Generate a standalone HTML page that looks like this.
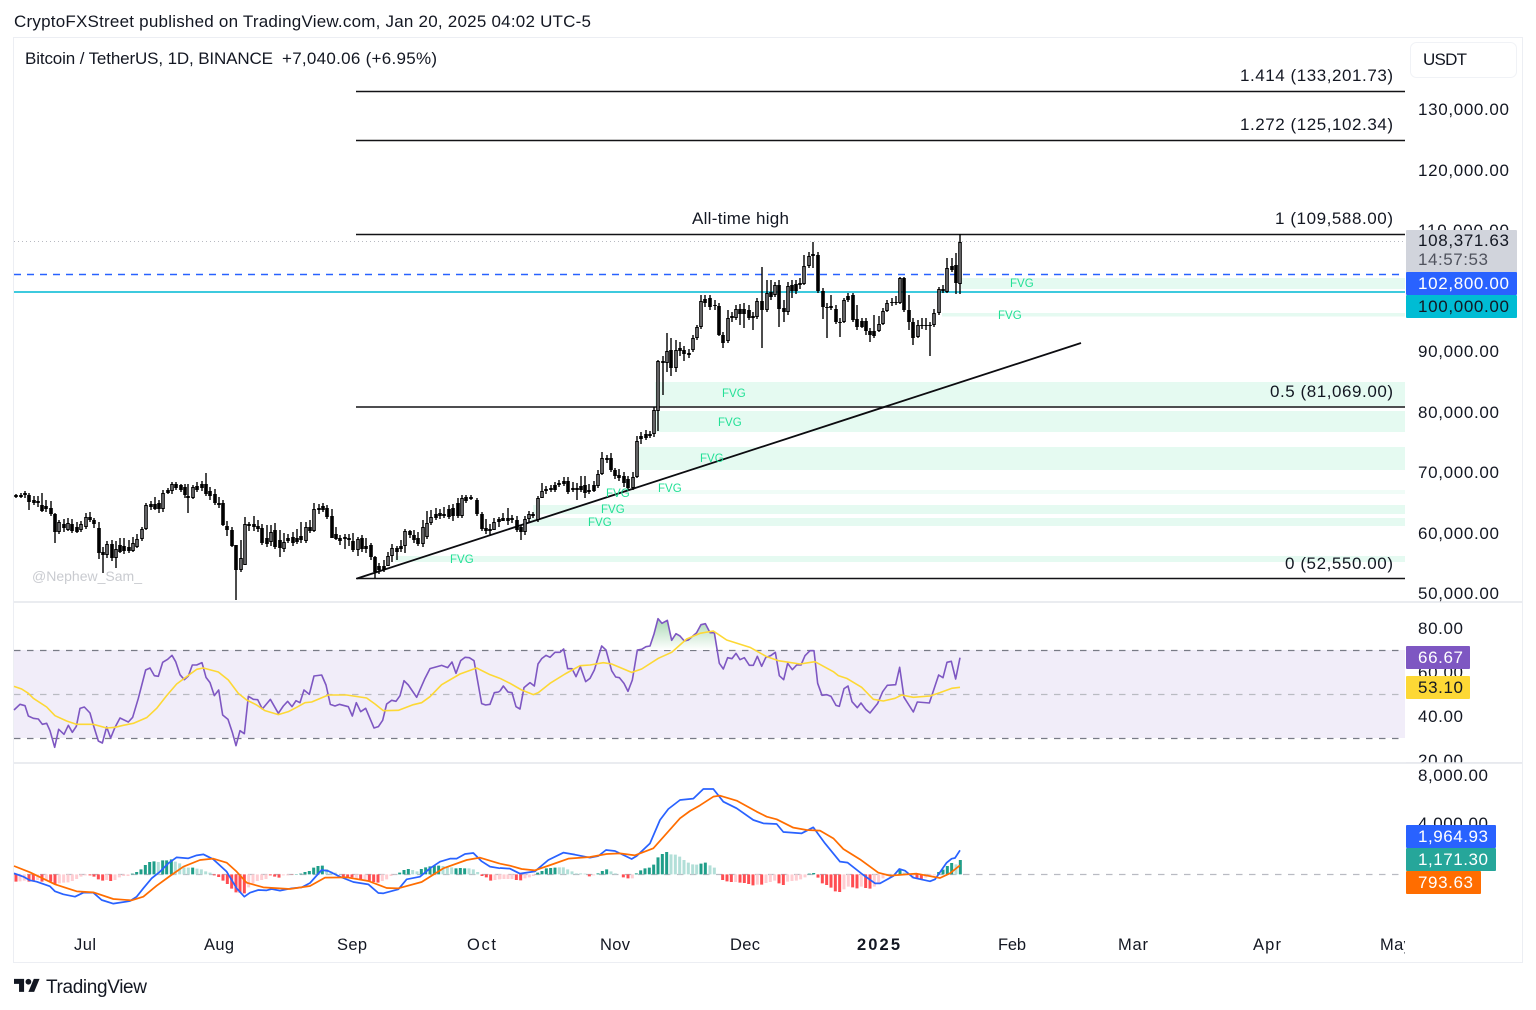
<!DOCTYPE html>
<html><head><meta charset="utf-8"><title>BTC chart</title>
<style>
html,body{margin:0;padding:0;background:#fff;width:1536px;height:1010px;overflow:hidden}
svg{display:block}
text{font-family:"Liberation Sans",sans-serif;fill:#131722;font-size:17px}
.f{font-size:11.5px;fill:#22e096}
.t{font-size:16.5px}
</style></head><body>
<svg width="1536" height="1010" viewBox="0 0 1536 1010" xmlns="http://www.w3.org/2000/svg">
<defs><linearGradient id="gr" x1="0" y1="0" x2="0" y2="1"><stop offset="0" stop-color="#a9d8b4"/><stop offset="1" stop-color="#fff"/></linearGradient></defs>
<rect width="1536" height="1010" fill="#fff"/>
<text x="14" y="27" textLength="577" lengthAdjust="spacing">CryptoFXStreet published on TradingView.com, Jan 20, 2025 04:02 UTC-5</text>
<rect x="13.5" y="37.5" width="1509" height="925" fill="#fff" stroke="#eceef3"/>
<text x="25" y="64" textLength="248" lengthAdjust="spacing">Bitcoin / TetherUS, 1D, BINANCE</text>
<text x="282" y="64" textLength="155" lengthAdjust="spacing">+7,040.06 (+6.95%)</text>

<!-- FVG -->
<g fill="#e5faf1">
<rect x="961" y="278" width="444" height="11"/>
<rect x="942" y="313" width="463" height="3.5"/>
<rect x="655" y="382" width="750" height="24"/>
<rect x="655" y="411" width="750" height="21"/>
<rect x="636" y="447" width="769" height="23"/>
<rect x="623" y="490" width="782" height="4" fill="#f0fcf7"/>
<rect x="533" y="505" width="872" height="9"/>
<rect x="530" y="518" width="875" height="8"/>
<rect x="395" y="556" width="1010" height="6"/>
</g>
<path d="M14 241.5H1405" stroke="#b8bac2" stroke-dasharray="1 3" fill="none"/>
<path d="M14 274.5H1405" stroke="#2962ff" stroke-width="1.6" stroke-dasharray="7 6" fill="none"/>
<path d="M14 292H1405" stroke="#22c3d9" stroke-width="1.7" fill="none"/>
<path d="M356 91.5H1405M356 140.5H1405M356 234.5H1405M356 407H1405M356 578.5H1405" stroke="#131316" stroke-width="1.5" fill="none"/>
<path d="M357 578.5L1081 343" stroke="#0c0c10" stroke-width="1.8" fill="none"/>

<!-- wicks -->
<path fill="none" stroke="#000" stroke-width="1.4" d="M16 494V498M21 493V498M25 491V498M29 493V510M34 496V505M38 496V507M42 493V512M46 500V512M51 501V516M55 513V543M59 520V534M64 519V532M68 518V531M72 519V533M77 522V533M81 521V532M86 513V529M90 512V522M94 518V528M99 522V559M103 547V573M107 541V558M112 540V561M116 541V568M120 538V553M124 538V554M129 540V553M133 537V552M137 534V548M142 527V541M146 503V530M151 501V510M155 497V510M159 500V513M163 490V512M168 488V494M172 482V494M176 482V490M181 484V492M185 484V498M188 484V513M193 485V499M197 482V492M202 481V491M206 473V496M210 487V500M215 489V505M219 497V508M223 500V526M227 521V536M232 527V547M236 545V600M241 540V572M245 517V565M249 522V531M254 516V531M258 520V532M262 524V545M267 525V547M271 525V546M275 523V549M280 530V557M284 533V552M288 534V543M293 532V546M297 529V544M301 522V543M306 522V543M310 520V533M314 503V532M319 504V514M323 503V512M327 505V519M332 509V538M336 527V540M340 535V545M345 534V549M349 534V546M353 533V552M358 537V556M362 535V552M366 538V553M371 543V560M375 556V578M379 563V574M384 560V572M388 552V566M392 544V562M397 546V560M401 540V552M405 529V553M410 530V538M414 530V543M418 532V546M423 520V547M427 511V539M431 510V525M436 508V520M440 509V519M444 507V518M449 505V519M453 504V521M458 498V518M462 495V518M466 495V503M471 495V500M477 498V516M482 512V531M486 519V534M490 524V535M494 518V530M499 517V527M503 513V521M508 508V525M512 515V523M517 516V532M521 525V540M525 516V535M529 511V522M533 512V518M538 496V522M542 483V498M546 486V494M551 485V492M555 482V492M559 480V487M564 477V486M568 477V494M573 482V492M577 483V500M581 476V492M585 476V498M589 484V494M594 481V492M598 470V488M602 452V475M607 455V463M611 453V472M615 468V479M619 469V481M624 472V487M628 476V490M633 472V490M637 436V478M641 432V444M646 430V440M650 431V438M654 407V437M658 360V431M663 356V395M667 333V372M671 338V376M676 340V372M680 342V356M684 346V361M689 349V358M693 335V352M697 325V340M701 295V329M705 295V307M710 295V310M715 300V310M719 303V336M723 332V348M728 310V343M732 312V322M736 305V320M740 304V325M744 303V328M749 305V320M753 312V330M757 298V319M762 267V348M767 280V312M771 280V300M775 282V297M779 280V327M784 300V322M788 282V315M792 280V298M796 280V294M800 278V289M804 255V285M809 252V268M813 242V268M818 252V293M823 288V319M827 303V338M831 295V310M836 305V324M840 318V337M844 298V323M848 293V302M853 293V322M857 305V330M862 318V328M866 318V335M870 328V342M874 315V338M879 316V332M883 308V325M887 300V312M892 298V306M896 296V305M900 277V304M904 277V312M909 295V330M913 318V345M918 320V338M922 318V329M926 318V330M930 322V356M934 309V327M939 287V315M943 285V293M947 258V293M952 258V272M956 253V294M960 234V294"/>
<!-- down bodies -->
<path fill="none" stroke="#000" stroke-width="3.6" d="M16 495V497M29 495V502M34 500V503M38 501V503M42 505V511M46 506V509M51 508V514M55 514V532M64 524V528M72 524V531M77 527V532M90 517V520M94 520V524M99 528V553M103 552V555M112 544V558M120 545V552M124 546V551M151 504V507M155 504V509M159 503V509M176 484V488M181 485V490M185 487V495M188 496V498M197 486V490M206 484V494M210 491V496M215 494V503M219 503V505M223 503V525M227 526V530M232 530V546M236 545V570M249 524V526M254 524V527M258 526V529M262 528V543M267 538V544M275 530V547M280 540V548M288 538V541M293 537V543M297 538V542M301 536V540M310 527V531M319 508V510M323 506V510M327 508V517M332 516V538M336 534V539M340 538V541M345 537V539M349 538V540M353 541V550M362 538V549M366 546V549M371 545V557M375 557V572M397 548V552M410 531V535M414 535V540M418 538V544M436 514V518M440 513V516M444 514V516M449 509V517M453 508V516M458 503V516M466 497V501M471 497V499M477 500V514M482 514V529M486 528V531M490 529V531M517 520V530M521 527V532M533 514V516M546 489V491M551 488V490M568 481V492M573 488V490M577 488V490M581 486V490M585 485V493M589 490V492M611 458V470M615 470V476M619 475V478M624 476V483M628 479V488M641 436V439M646 434V438M650 434V436M671 350V368M680 348V351M684 350V354M689 353V355M710 298V307M719 306V335M723 335V343M744 309V314M749 310V318M753 316V318M762 301V310M779 285V309M784 308V312M792 285V291M818 255V291M823 291V307M827 307V308M836 309V322M840 322V323M853 295V320M857 319V327M862 321V327M866 321V331M870 331V335M904 278V310M909 310V322M913 322V338M956 265V283"/>
<!-- up bodies -->
<path fill="none" stroke="#000" stroke-width="3.6" d="M21 495V497M25 493V495M59 522V532M68 523V530M81 524V530M86 517V527M107 544V555M116 549V558M129 547V551M133 543V551M137 539V547M142 529V539M146 505V529M163 493V509M168 490V493M172 484V491M193 487V498M202 484V488M241 558V570M245 524V565M271 532V542M284 542V549M306 527V541M314 509V531M358 539V550M379 566V570M384 566V570M388 556V566M392 548V556M401 546V549M405 531V546M423 527V544M427 523V537M431 517V523M462 498V516M494 522V530M499 519V522M503 518V521M508 518V521M512 518V520M525 519V532M529 514V519M538 498V520M542 491V498M555 485V490M559 483V485M564 481V484M594 485V491M598 474V486M602 458V474M607 458V460M633 477V488M637 441V477M654 410V434M658 361V411M663 361V363M667 351V363M676 350V368M693 338V350M697 327V338M701 301V327M705 299V303M715 305V306M728 318V341M732 316V318M736 309V318M740 309V314M757 301V317M767 293V310M771 292V297M775 285V295M788 286V312M796 284V291M800 283V285M804 266V284M809 256V266M813 254V256M831 306V308M844 300V322M848 296V300M874 331V336M879 324V331M883 311V324M887 303V311M892 302V303M896 302V303M900 278V303M918 325V337M922 325V326M926 325V326M930 325V326M934 313V325M939 289V313M943 289V291M947 268V292M952 266V270M960 242V284"/>
<path fill="none" stroke="#c4c4c8" stroke-width="1" d="M59 523V531M68 524V529M81 525V529M86 518V526M107 545V554M116 550V557M133 544V550M137 540V546M142 530V538M146 506V528M163 494V508M172 485V490M193 488V497M241 559V569M245 525V564M271 533V541M284 543V548M306 528V540M314 510V530M358 540V549M388 557V565M392 549V555M405 532V545M423 528V543M427 524V536M431 518V522M462 499V515M494 523V529M525 520V531M529 515V518M538 499V519M542 492V497M598 475V485M602 459V473M633 478V487M637 442V476M654 411V433M658 362V410M667 352V362M676 351V367M693 339V349M697 328V337M701 302V326M728 319V340M736 310V317M757 302V316M767 294V309M775 286V294M788 287V311M804 267V283M809 257V265M844 301V321M879 325V330M883 312V323M887 304V310M900 279V302M918 326V336M934 314V324M939 290V312M947 269V291M960 243V283"/>

<text x="692" y="224" textLength="97" lengthAdjust="spacing">All-time high</text>
<text x="1240" y="81" textLength="153" lengthAdjust="spacing">1.414 (133,201.73)</text>
<text x="1240" y="130" textLength="153" lengthAdjust="spacing">1.272 (125,102.34)</text>
<text x="1275" y="224" textLength="118" lengthAdjust="spacing">1 (109,588.00)</text>
<text x="1270" y="397" textLength="123" lengthAdjust="spacing">0.5 (81,069.00)</text>
<text x="1285" y="569" textLength="108" lengthAdjust="spacing">0 (52,550.00)</text>
<g>
<text class="f" x="1010" y="287">FVG</text>
<text class="f" x="998" y="319">FVG</text>
<text class="f" x="722" y="397">FVG</text>
<text class="f" x="718" y="426">FVG</text>
<text class="f" x="700" y="462">FVG</text>
<text class="f" x="658" y="492">FVG</text>
<text class="f" x="606" y="497">FVG</text>
<text class="f" x="601" y="513">FVG</text>
<text class="f" x="588" y="526">FVG</text>
<text class="f" x="450" y="563">FVG</text>
</g>
<text x="32" y="581" style="font-size:14px;fill:#c9cbd0" textLength="110" lengthAdjust="spacing">@Nephew_Sam_</text>

<!-- separators -->
<path d="M14 602H1522M14 763H1522" stroke="#e4e6ec" stroke-width="1.5" fill="none"/>

<!-- RSI -->
<rect x="14" y="650" width="1391" height="88" fill="#f1edf9"/>
<path d="M14 650.5H1405M14 738.5H1405" stroke="#787b86" stroke-width="1.2" stroke-dasharray="6.5 6.5" fill="none"/>
<path d="M14 694.5H1405" stroke="#b9bbc2" stroke-width="1.2" stroke-dasharray="6.5 6.5" fill="none"/>
<g transform="translate(500,610) scale(.33333)">
<path fill="url(#gr)" d="M412 120L450 108L462 72L474 26L486 40L502 31L515 91L528 71L540 78L553 93L565 90L590 68L603 44L616 41L630 68L643 68L649 120Z"/>
</g>
<g fill="none" stroke-linejoin="round" stroke-width="4.8">
<g transform="translate(0,610) scale(.33333)">
<path stroke="#7e57c2" d="M42 300L60 283L75 287L85 318L100 325L115 327L127 343L140 340L150 362L164 412L176 358L192 373L205 346L217 367L229 349L240 295L253 291L270 309L280 345L295 393L307 399L320 351L332 384L345 352L360 324L385 336L398 322L415 265L437 180L450 174L463 197L475 199L488 157L503 148L516 136L527 155L540 194L553 209L565 198L577 165L590 165L606 158L618 202L630 218L643 257L656 240L668 315L684 328L697 367L708 407L720 362L733 371L745 259L760 268L773 269L787 297L811 268L835 310L850 288L863 274L876 290L888 272L900 278L912 240L928 253L942 198L965 195L978 225L991 283L1005 288L1018 283L1045 290L1057 318L1069 278L1082 305L1097 295L1122 354L1135 350L1148 331L1160 282L1175 271L1188 274L1200 257L1212 212L1225 225L1250 262L1275 205L1290 176L1325 166L1343 173L1356 156L1368 190L1382 152L1395 142L1408 143L1422 152L1445 281L1457 285L1470 283L1483 248L1495 246L1500 243"/>
<path stroke="#fdd835" d="M42 229L65 237L85 250L100 265L140 291L165 317L200 333L230 343L280 343L320 354L345 352L370 346L400 340L440 323L470 295L500 257L530 222L560 200L590 178L610 174L655 186L685 210L715 250L740 270L770 285L795 302L835 314L865 305L890 292L915 278L935 276L985 255L1040 255L1100 264L1125 282L1150 302L1195 301L1240 284L1265 278L1290 260L1325 224L1380 192L1430 174L1470 194L1500 205"/>
</g>
<g transform="translate(500,610) scale(.33333)">
<path stroke="#7e57c2" d="M0 243L10 228L24 246L36 248L48 290L60 297L72 233L90 218L103 228L114 162L125 146L138 136L150 142L165 127L180 127L191 117L203 176L216 176L228 200L241 170L257 215L270 205L283 180L305 108L318 120L335 182L347 201L358 203L372 220L384 244L397 210L412 120L425 118L438 110L450 108L462 72L474 26L486 40L502 31L515 91L528 71L540 78L553 93L565 90L590 68L603 44L616 41L630 68L643 68L658 160L670 177L683 143L696 146L708 130L720 149L733 143L748 166L760 166L772 139L785 169L797 143L812 137L826 127L838 197L851 209L863 160L877 179L890 165L903 165L915 137L930 122L942 122L953 220L966 256L980 254L993 259L1008 286L1018 289L1032 236L1044 228L1056 275L1072 293L1083 279L1097 298L1110 309L1133 280L1148 245L1162 226L1187 224L1199 172L1212 262L1240 306L1252 276L1288 279L1316 195L1329 203L1341 157L1354 154L1367 207L1380 143"/>
<path stroke="#fdd835" d="M0 205L30 220L65 240L100 254L115 248L150 220L195 192L240 167L270 165L310 158L335 162L395 187L425 177L475 145L515 127L560 87L600 70L640 63L680 90L750 112L800 140L835 152L900 162L945 155L1000 185L1015 197L1040 205L1085 232L1120 268L1150 273L1185 265L1205 255L1240 262L1290 258L1320 248L1355 235L1380 232"/>
</g>
</g>

<!-- MACD -->
<path d="M14 874.5H1405" stroke="#b9bbc2" stroke-width="1.2" stroke-dasharray="6.5 6.5" fill="none"/>
<g fill="none" stroke-width="9">
<g transform="translate(0,770) scale(.33333)">
<path stroke="#ffcdd2" d="M60 313V334M73 313V332M113 313V330M139 313V330M178 313V340M191 313V338M204 313V337M217 313V333M230 313V327M243 313V320M256 313V316M320 313V330M345 313V330M358 313V322M371 313V318M384 313V318M746 313V352M759 313V340M772 313V333M785 313V330M798 313V327M850 313V316M863 313V316M1069 313V326M1095 313V330M1147 313V333M1160 313V328M1173 313V318M1186 313V314M1485 313V330M1498 313V328"/>
<path stroke="#ff4d52" d="M48 313V335M87 313V335M100 313V333M126 313V335M152 313V335M165 313V342M270 313V316M282 313V320M295 313V328M308 313V332M332 313V333M643 313V316M656 313V321M669 313V332M682 313V342M695 313V356M708 313V367M720 313V368M733 313V370M811 313V316M824 313V320M837 313V323M876 313V314M1030 313V323M1043 313V323M1056 313V322M1082 313V330M1108 313V333M1121 313V336M1134 313V338M1446 313V318M1459 313V322M1472 313V332"/>
<path stroke="#b2dfd8" d="M475 313V276M526 313V275M539 313V280M552 313V292M565 313V293M591 313V296M604 313V298M617 313V304M630 313V308M980 313V297M993 313V304M1006 313V308M1238 313V300M1251 313V304M1329 313V288M1342 313V290M1355 313V292M1407 313V295M1420 313V298M1433 313V306"/>
<path stroke="#1f9e89" d="M397 313V311M410 313V306M423 313V298M436 313V285M449 313V276M462 313V274M488 313V271M500 313V271M514 313V268M578 313V293M889 313V312M902 313V311M915 313V306M928 313V303M941 313V293M954 313V288M967 313V287M1199 313V308M1212 313V300M1225 313V297M1264 313V297M1277 313V292M1290 313V289M1303 313V287M1316 313V287M1368 313V295M1381 313V294M1394 313V295"/>
</g>
<g transform="translate(500,770) scale(.33333)">
<path stroke="#ffcdd2" d="M0 313V327M12 313V327M24 313V327M36 313V327M75 313V325M88 313V322M100 313V318M281 313V316M397 313V325M707 313V336M772 313V344M798 313V339M811 313V336M824 313V332M863 313V335M876 313V333M889 313V332M902 313V328M915 313V322M1032 313V358M1045 313V350M1084 313V350M1123 313V350M1136 313V340M1149 313V325M1162 313V318M1238 313V325M1277 313V323M1290 313V318M1303 313V316"/>
<path stroke="#ff4d52" d="M49 313V330M62 313V331M268 313V319M370 313V322M384 313V325M668 313V330M681 313V334M694 313V336M720 313V338M733 313V339M746 313V342M759 313V346M785 313V344M837 313V340M850 313V345M954 313V323M967 313V340M980 313V345M993 313V353M1006 313V364M1019 313V366M1058 313V352M1071 313V355M1097 313V354M1110 313V356M1251 313V325M1264 313V328"/>
<path stroke="#b2dfd8" d="M178 313V292M190 313V292M203 313V298M216 313V304M229 313V310M242 313V310M255 313V311M333 313V304M346 313V310M513 313V253M526 313V254M539 313V260M552 313V270M565 313V278M578 313V283M590 313V284M630 313V286M643 313V293M1213 313V308M1225 313V311M1368 313V283"/>
<path stroke="#1f9e89" d="M113 313V308M126 313V303M139 313V295M152 313V294M165 313V293M294 313V310M307 313V303M320 313V298M409 313V310M422 313V301M435 313V295M448 313V293M461 313V284M474 313V262M487 313V252M500 313V246M603 313V281M616 313V278M928 313V311M941 313V309M1200 313V300M1316 313V306M1329 313V299M1342 313V288M1355 313V279M1381 313V270"/>
</g>
</g>
<g fill="none" stroke-linejoin="round" stroke-width="5.2">
<g transform="translate(0,770) scale(.33333)">
<path stroke="#2962ff" d="M42 310L70 320L90 331L110 335L150 349L165 364L190 373L225 380L250 368L280 368L305 390L340 401L390 393L410 380L430 355L455 325L480 305L505 280L530 262L565 265L590 256L610 253L640 268L680 305L710 355L733 380L750 368L775 360L800 361L815 357L840 362L875 355L905 352L930 339L965 300L985 303L1020 320L1060 336L1105 343L1135 369L1150 370L1195 358L1220 328L1260 320L1290 295L1320 275L1350 266L1370 266L1395 252L1420 249L1445 274L1470 290L1500 295"/>
<path stroke="#ff6d00" d="M42 288L90 307L165 343L230 364L280 367L340 387L395 391L430 380L470 347L510 318L550 290L600 270L640 266L680 278L710 305L740 338L790 352L870 357L930 348L975 323L1040 322L1105 333L1160 354L1195 355L1265 336L1330 295L1400 270L1440 263L1500 281"/>
</g>
<g transform="translate(500,770) scale(.33333)">
<path stroke="#2962ff" d="M0 294L30 296L60 311L105 304L145 270L190 248L225 254L270 263L295 258L318 240L345 243L395 267L410 258L450 220L480 150L505 117L540 90L580 86L610 57L640 57L670 95L710 115L760 150L790 160L830 162L850 186L905 190L940 172L975 220L1020 275L1043 278L1090 315L1125 340L1140 340L1180 318L1198 297L1215 302L1240 323L1290 334L1305 328L1340 278L1355 266L1365 264L1380 241"/>
<path stroke="#ff6d00" d="M0 281L30 287L65 297L105 301L160 282L205 266L270 261L320 252L360 250L405 256L460 235L500 190L540 145L570 123L600 106L640 80L660 77L710 92L770 125L800 140L830 148L880 173L920 180L960 182L1000 205L1030 237L1080 268L1135 308L1170 317L1250 311L1320 324L1350 310L1380 286"/>
</g>
</g>

<!-- time axis -->
<g>
<text class="t" x="74" y="950" textLength="22" lengthAdjust="spacing">Jul</text>
<text class="t" x="204" y="950" textLength="30" lengthAdjust="spacing">Aug</text>
<text class="t" x="337" y="950" textLength="30" lengthAdjust="spacing">Sep</text>
<text class="t" x="467" y="950" textLength="29" lengthAdjust="spacing">Oct</text>
<text class="t" x="600" y="950" textLength="30" lengthAdjust="spacing">Nov</text>
<text class="t" x="730" y="950" textLength="30" lengthAdjust="spacing">Dec</text>
<text class="t" x="857" y="950" textLength="43" lengthAdjust="spacing" style="font-weight:700">2025</text>
<text class="t" x="998" y="950" textLength="28" lengthAdjust="spacing">Feb</text>
<text class="t" x="1118" y="950" textLength="30" lengthAdjust="spacing">Mar</text>
<text class="t" x="1253" y="950" textLength="28" lengthAdjust="spacing">Apr</text>
<text class="t" x="1380" y="950" textLength="32" lengthAdjust="spacing">May</text>
</g>
<rect x="1405" y="930" width="16" height="30" fill="#fff"/>

<!-- price axis -->
<rect x="1410.5" y="42.5" width="106" height="35" rx="6" fill="#fff" stroke="#f0f2f6"/>
<text x="1423" y="65" textLength="44" lengthAdjust="spacing">USDT</text>
<text x="1418" y="115" textLength="91" lengthAdjust="spacing">130,000.00</text>
<text x="1418" y="176" textLength="91" lengthAdjust="spacing">120,000.00</text>
<text x="1418" y="236" textLength="91" lengthAdjust="spacing">110,000.00</text>
<text x="1418" y="357" textLength="81" lengthAdjust="spacing">90,000.00</text>
<text x="1418" y="418" textLength="81" lengthAdjust="spacing">80,000.00</text>
<text x="1418" y="478" textLength="81" lengthAdjust="spacing">70,000.00</text>
<text x="1418" y="539" textLength="81" lengthAdjust="spacing">60,000.00</text>
<text x="1418" y="599" textLength="81" lengthAdjust="spacing">50,000.00</text>
<rect x="1406" y="230" width="111" height="43" fill="#d1d4dc" rx="1"/>
<text x="1418" y="246" textLength="91" lengthAdjust="spacing">108,371.63</text>
<text x="1418" y="265" textLength="70" lengthAdjust="spacing" style="fill:#50535e">14:57:53</text>
<rect x="1406" y="272" width="111" height="23" fill="#2962ff" rx="1"/>
<text x="1418" y="289" textLength="91" lengthAdjust="spacing" style="fill:#fff">102,800.00</text>
<rect x="1406" y="295" width="111" height="23" fill="#00bcd4" rx="1"/>
<text x="1418" y="312" textLength="91" lengthAdjust="spacing">100,000.00</text>

<text x="1418" y="634" textLength="45" lengthAdjust="spacing">80.00</text>
<text x="1418" y="678" textLength="45" lengthAdjust="spacing">60.00</text>
<text x="1418" y="722" textLength="45" lengthAdjust="spacing">40.00</text>
<text x="1418" y="766" textLength="45" lengthAdjust="spacing">20.00</text>
<rect x="1406" y="646" width="64" height="23" fill="#7e57c2" rx="1"/>
<text x="1418" y="663" textLength="45" lengthAdjust="spacing" style="fill:#fff">66.67</text>
<rect x="1406" y="676" width="64" height="23" fill="#fdd835" rx="1"/>
<text x="1418" y="693" textLength="45" lengthAdjust="spacing">53.10</text>
<rect x="1406" y="763" width="116" height="5" fill="#fff"/>
<path d="M1406 763H1522" stroke="#e4e6ec" stroke-width="1.5" fill="none"/>
<text x="1418" y="781" textLength="70" lengthAdjust="spacing">8,000.00</text>
<text x="1418" y="829" textLength="70" lengthAdjust="spacing">4,000.00</text>
<rect x="1406" y="825" width="90" height="23" fill="#2962ff" rx="1"/>
<text x="1418" y="842" textLength="70" lengthAdjust="spacing" style="fill:#fff">1,964.93</text>
<rect x="1406" y="848" width="90" height="23" fill="#26a69a" rx="1"/>
<text x="1418" y="865" textLength="70" lengthAdjust="spacing" style="fill:#fff">1,171.30</text>
<rect x="1406" y="871" width="75" height="23" fill="#ff6d00" rx="1"/>
<text x="1418" y="888" textLength="55" lengthAdjust="spacing" style="fill:#fff">793.63</text>

<!-- logo -->
<g transform="translate(14,976) scale(.72)" fill="#131722">
<path d="M14 22H7V11H0V4h14v18zM28 22h-8l7.5-18h8L28 22z"/><circle cx="20" cy="8" r="4"/>
</g>
<text x="46" y="993" textLength="101" lengthAdjust="spacing" style="font-size:19px">TradingView</text>
</svg>
</body></html>
